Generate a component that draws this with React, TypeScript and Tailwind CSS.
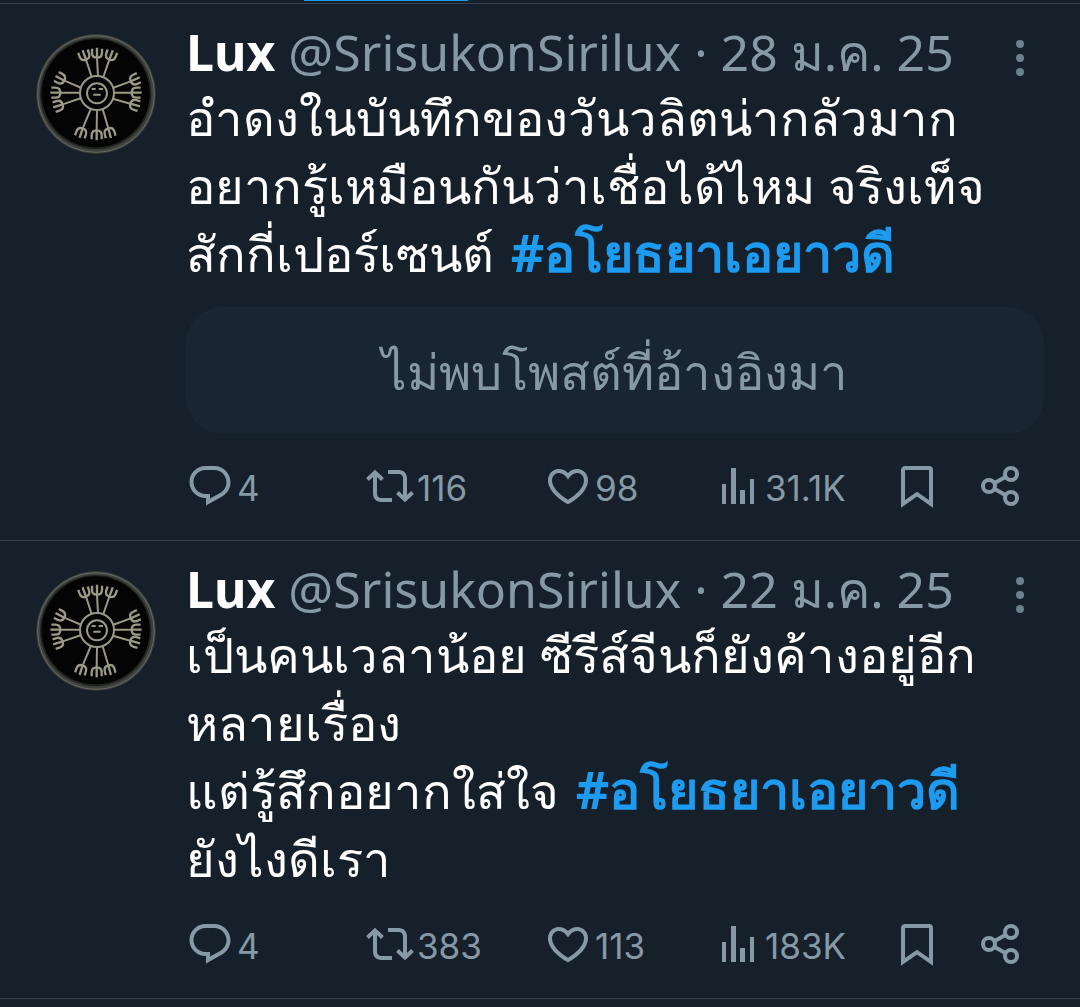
import React from 'react';

type Line = { text: string; hashtag?: string };

type PostData = {
  date: string;
  lines: Line[];
  unavailable?: string;
  replies: string;
  reposts: string;
  likes: string;
  views: string;
};

const posts: PostData[] = [
  {
    date: '28 ม.ค. 25',
    lines: [
      { text: 'อำดงในบันทึกของวันวลิตน่ากลัวมาก' },
      { text: 'อยากรู้เหมือนกันว่าเชื่อได้ไหม จริงเท็จ' },
      { text: 'สักกี่เปอร์เซนต์', hashtag: '#อโยธยาเอยาวดี' },
    ],
    unavailable: 'ไม่พบโพสต์ที่อ้างอิงมา',
    replies: '4',
    reposts: '116',
    likes: '98',
    views: '31.1K',
  },
  {
    date: '22 ม.ค. 25',
    lines: [
      { text: 'เป็นคนเวลาน้อย ซีรีส์จีนก็ยังค้างอยู่อีก' },
      { text: 'หลายเรื่อง' },
      { text: 'แต่รู้สึกอยากใส่ใจ', hashtag: '#อโยธยาเอยาวดี' },
      { text: 'ยังไงดีเรา' },
    ],
    replies: '4',
    reposts: '383',
    likes: '113',
    views: '183K',
  },
];

// x, y of the fork's base and the direction its tines point in
const forks = [
  [198, 118, -20],
  [231, 112, 0],
  [268, 118, 20],
  [188, 324, 198],
  [230, 330, 180],
  [265, 324, 165],
  [133, 181, -62],
  [121, 217, -90],
  [128, 252, -108],
  [332, 183, 66],
  [335, 217, 90],
  [331, 250, 106],
];

const ReplyIcon = () => (
  <svg viewBox="0 0 24 24" className="size-12 shrink-0" fill="currentColor" aria-hidden="true">
    <path d="M1.751 10c0-4.42 3.584-8 8.005-8h4.366c4.49 0 8.129 3.64 8.129 8.13 0 2.96-1.607 5.68-4.196 7.11l-8.054 4.46v-3.69h-.067c-4.49.1-8.183-3.51-8.183-8.01zm8.005-6c-3.317 0-6.005 2.69-6.005 6 0 3.37 2.77 6.08 6.138 6.01l.351-.01h1.761v2.3l5.087-2.81c1.951-1.08 3.163-3.13 3.163-5.36 0-3.39-2.744-6.13-6.129-6.13H9.756z" />
  </svg>
);

const RepostIcon = () => (
  <svg viewBox="0 0 24 24" className="size-12 shrink-0" fill="currentColor" aria-hidden="true">
    <path d="M4.5 3.88l4.432 4.14-1.364 1.46L5.5 7.55V16c0 1.1.896 2 2 2H13v2H7.5c-2.209 0-4-1.79-4-4V7.55L1.432 9.48.068 8.02 4.5 3.88zM16.5 6H11V4h5.5c2.209 0 4 1.79 4 4v8.45l2.068-1.93 1.364 1.46-4.432 4.14-4.432-4.14 1.364-1.46 2.068 1.93V8c0-1.1-.896-2-2-2z" />
  </svg>
);

const LikeIcon = () => (
  <svg viewBox="0 0 24 24" className="size-12 shrink-0" fill="currentColor" aria-hidden="true">
    <path d="M16.697 5.5c-1.222-.06-2.679.51-3.89 2.16l-.805 1.09-.806-1.09C9.984 6.01 8.526 5.44 7.304 5.5c-1.243.07-2.349.78-2.91 1.91-.552 1.12-.633 2.78.479 4.82 1.074 1.97 3.257 4.27 7.129 6.61 3.87-2.34 6.052-4.64 7.126-6.61 1.111-2.04 1.03-3.7.477-4.82-.561-1.13-1.666-1.84-2.908-1.91zm4.187 7.69c-1.351 2.48-4.001 5.12-8.379 7.67l-.503.3-.504-.3c-4.379-2.55-7.029-5.19-8.382-7.67-1.36-2.5-1.41-4.86-.514-6.67.887-1.79 2.647-2.91 4.601-3.01 1.651-.09 3.368.56 4.798 2.01 1.429-1.45 3.146-2.1 4.796-2.01 1.954.1 3.714 1.22 4.601 3.01.896 1.81.846 4.17-.514 6.67z" />
  </svg>
);

const ViewsIcon = () => (
  <svg viewBox="0 0 24 24" className="size-12 shrink-0" fill="currentColor" aria-hidden="true">
    <path d="M8.5 21V3H11v18H8.5zM18 21V8.5h2V21h-2zM4 21V11h2v10H4zm9 0v-7h2.5v7H13z" />
  </svg>
);

const BookmarkIcon = () => (
  <svg viewBox="0 0 24 24" className="size-12 shrink-0" fill="none" stroke="currentColor" strokeWidth="2" aria-hidden="true">
    <path d="M5 21V4c0-.55.45-1 1-1h12c.55 0 1 .45 1 1v17l-7-4.9z" />
  </svg>
);

const ShareIcon = () => (
  <svg viewBox="0 0 24 24" className="size-12 shrink-0" fill="none" stroke="currentColor" strokeWidth="2" aria-hidden="true">
    <circle cx="6.5" cy="12" r="3" />
    <circle cx="17.5" cy="6" r="3" />
    <circle cx="17.5" cy="18" r="3" />
    <path d="M9.1 10.6l5.8-3.2M9.1 13.4l5.8 3.2" />
  </svg>
);

const Avatar = () => (
  <svg viewBox="48 41 360 360" className="size-[120px]" role="img" aria-label="Lux">
    <circle cx="228" cy="221" r="179" fill="#3e413d" />
    <circle cx="228" cy="221" r="175" fill="none" stroke="#656862" strokeWidth="3" />
    <circle cx="227" cy="220" r="167" fill="#20231f" />
    <circle cx="227" cy="219" r="162" fill="#030403" />
    <g fill="none" stroke="#9b9888" strokeWidth="6" strokeLinejoin="round">
      <circle cx="231" cy="218" r="51" />
      <circle cx="231" cy="219" r="30" />
      <path d="M215 206h12M236 206h13M220 223h22" />
      <path d="M215 170l-17-52M234 167l-3-55M250 170l18-52" />
      <path d="M212 267l-24 57M231 270l-1 60M248 267l17 57" />
      <path d="M185 203l-52-22M180 217h-59M184 233l-56 19" />
      <path d="M278 203l54-20M281 217h54M278 235l53 15" />
      {forks.map(([x, y, angle]) => (
        <path
          key={`${x}-${y}`}
          d="M-15-27v12c0 10 5 15 15 15s15-5 15-15v-12M0-30V0"
          strokeWidth="7"
          transform={`translate(${x} ${y}) rotate(${angle})`}
        />
      ))}
    </g>
  </svg>
);

const Action: React.FC<{ label: string; count?: string; children: React.ReactNode }> = ({ label, count, children }) => (
  <button type="button" aria-label={label} className="flex items-start gap-[3px] justify-self-start">
    {children}
    {count && <span className="font-['Inter',sans-serif] text-[35px] leading-[52px]">{count}</span>}
  </button>
);

const Post: React.FC<{ post: PostData }> = ({ post }) => (
  <article className="flex border-t border-[#38444d] px-9 pt-[14px] pb-[26px]">
    <div className="w-[150px] shrink-0 pt-4">
      <Avatar />
    </div>
    <div className="min-w-0 flex-1">
      <header className="flex justify-between">
        <p className="text-[50px] leading-[68px] whitespace-nowrap text-[#8899a6]">
          <span className="font-bold text-white">Lux</span> @SrisukonSirilux · {post.date}
        </p>
        <button type="button" aria-label="More" className="flex h-14 w-12 items-center justify-center self-end">
          <svg viewBox="0 0 8 36" className="h-9 w-2" fill="#6f808d" aria-hidden="true">
            <circle cx="4" cy="4" r="4" />
            <circle cx="4" cy="18" r="4" />
            <circle cx="4" cy="32" r="4" />
          </svg>
        </button>
      </header>
      <div className="-mt-[3px] text-[49px] leading-[68px] text-white">
        {post.lines.map((line) => (
          <p key={line.text} className="whitespace-nowrap">
            {line.text}
            {line.hashtag && (
              <>
                {' '}
                <a href="#" className="ml-1 text-[52px] leading-none font-bold text-[#1d9bf0]">{line.hashtag}</a>
              </>
            )}
          </p>
        ))}
      </div>
      {post.unavailable && (
        <div className="mt-5 mb-[3px] rounded-[36px] bg-[#192530] pt-[30px] pb-[29px] text-center text-[49px] leading-[68px] text-[#8899a6]">
          {post.unavailable}
        </div>
      )}
      <div className="mt-7 grid grid-cols-[180fr_178fr_170fr_179fr_83fr_68fr] text-[#8899a6]">
        <Action label="Reply" count={post.replies}><ReplyIcon /></Action>
        <Action label="Repost" count={post.reposts}><RepostIcon /></Action>
        <Action label="Like" count={post.likes}><LikeIcon /></Action>
        <Action label="Views" count={post.views}><ViewsIcon /></Action>
        <Action label="Bookmark"><BookmarkIcon /></Action>
        <Action label="Share"><ShareIcon /></Action>
      </div>
    </div>
  </article>
);

const App: React.FC = () => {
  return (
    <main className="min-h-screen bg-[#16202a] font-['Noto_Sans',sans-serif]">
      <div className="h-[3px]">
        <div className="ml-[304px] h-px w-[164px] bg-[#1d9bf0]" />
      </div>
      {posts.map((post) => (
        <Post key={post.date} post={post} />
      ))}
      <div className="border-t border-[#38444d]" />
    </main>
  );
};

export default App;
